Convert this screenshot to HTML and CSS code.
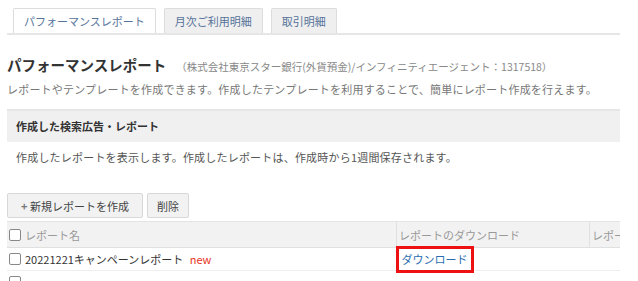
FILE: index.html
```html
<!DOCTYPE html>
<html lang="ja">
<head>
  <meta charset="UTF-8" />
  <meta name="viewport" content="width=device-width, initial-scale=1" />
  <title>パフォーマンスレポート</title>
  <link rel="stylesheet" href="styles.css">
</head>
<body>
  <div class="page">
    <ul class="tabs">
      <li class="tab active">パフォーマンスレポート</li>
      <li class="tab">月次ご利用明細</li>
      <li class="tab">取引明細</li>
    </ul>

    <div class="title-row">
      <h1>パフォーマンスレポート</h1>
      <span class="account">（株式会社東京スター銀行(外貨預金)/インフィニティエージェント：1317518）</span>
    </div>
    <p class="lead">レポートやテンプレートを作成できます。作成したテンプレートを利用することで、簡単にレポート作成を行えます。</p>

    <div class="section-head">作成した検索広告・レポート</div>
    <p class="note">作成したレポートを表示します。作成したレポートは、作成時から1週間保存されます。</p>

    <div class="toolbar">
      <button class="btn"><span class="plus">+</span> 新規レポートを作成</button>
      <button class="btn">削除</button>
    </div>

    <div class="table-wrap">
      <table class="reports">
        <thead>
          <tr>
            <th class="col-name"><span class="check"></span>レポート名</th>
            <th class="col-dl">レポートのダウンロード</th>
            <th class="col-more">レポート種別</th>
          </tr>
        </thead>
        <tbody>
          <tr>
            <td class="col-name"><span class="check"></span>20221221キャンペーンレポート <span class="new">new</span></td>
            <td class="col-dl"><a href="#" class="dl">ダウンロード</a></td>
            <td class="col-more"></td>
          </tr>
          <tr>
            <td class="col-name"><span class="check"></span></td>
            <td class="col-dl"></td>
            <td class="col-more"></td>
          </tr>
        </tbody>
      </table>
    </div>
  </div>
</body>
</html>
```

FILE: styles.css
```css
body {
  margin: 0;
  padding: 0 7px;
  background: #fff;
  font-family: "Noto Sans CJK JP", "Noto Sans", sans-serif;
  color: #333;
  overflow: hidden;
}

.page {
  width: 613px;
}

.tabs {
  list-style: none;
  margin: 0;
  padding: 8px 0 0 6px;
  display: flex;
  gap: 8px;
  border-bottom: 2px solid #e6e6e6;
}

.tab {
  height: 24px;
  padding: 0 10px;
  font-size: 11px;
  line-height: 24px;
  color: #56739a;
  background: #efefef;
  border: 1px solid #dcdcdc;
  border-bottom: none;
  border-radius: 2px 2px 0 0;
}

.tab.active {
  background: #fff;
}

.title-row {
  display: flex;
  align-items: baseline;
  margin-top: 19px;
}

h1 {
  margin: 0;
  font-size: 14.5px;
  font-weight: bold;
  color: #333;
  line-height: 22px;
}

.account {
  margin-left: 10px;
  font-size: 10.5px;
  color: #888;
}

.lead {
  margin: 5px 0 0;
  font-size: 11px;
  line-height: 16px;
  color: #777;
  letter-spacing: 0.2px;
}

.section-head {
  margin-top: 12px;
  border-top: 2px solid #e6e6e6;
  background: #f0f0f0;
  height: 31px;
  line-height: 31px;
  padding-left: 9px;
  font-size: 11px;
  font-weight: bold;
  color: #333;
}

.note {
  margin: 7px 0 0 9px;
  font-size: 11px;
  line-height: 16px;
  color: #555;
  letter-spacing: 0.2px;
}

.toolbar {
  display: flex;
  gap: 4px;
  margin-top: 28px;
}

.btn {
  height: 25px;
  padding: 0 9px;
  font-family: inherit;
  font-size: 11px;
  color: #444;
  background: #f2f2f2;
  border: 1px solid #d8d8d8;
  border-radius: 2px;
}

.btn:first-child {
  padding: 0 13px;
}

.plus {
  color: #777;
  font-weight: bold;
}

.table-wrap {
  margin-top: 3px;
  overflow: hidden;
  width: 613px;
}

.reports {
  border-collapse: collapse;
  width: 700px;
  table-layout: fixed;
  font-size: 11px;
}

.reports th {
  height: 25px;
  text-align: left;
  font-weight: normal;
  color: #999;
  background: #f2f2f2;
  border-top: 1px solid #e4e4e4;
  border-bottom: 1px solid #e0e0e0;
  padding: 0 0 0 2px;
}

.reports th + th {
  border-left: 1px solid #e0e0e0;
}

.reports td {
  height: 22px;
  padding: 0 0 0 2px;
  color: #333;
  border-bottom: 1px solid #eee;
}

.col-name {
  width: 387px;
}

.col-dl {
  width: 190px;
}

.check {
  display: inline-block;
  width: 10px;
  height: 10px;
  border: 1px solid #888;
  border-radius: 2px;
  background: #fff;
  margin-right: 4px;
  vertical-align: -1px;
}

.new {
  color: #e8341c;
  margin-left: 4px;
}

.dl {
  display: inline-block;
  color: #2a6db0;
  text-decoration: none;
  padding: 1px 3px;
  outline: 3px solid #ee1111;
  outline-offset: 0;
  line-height: 19px;
}
```
